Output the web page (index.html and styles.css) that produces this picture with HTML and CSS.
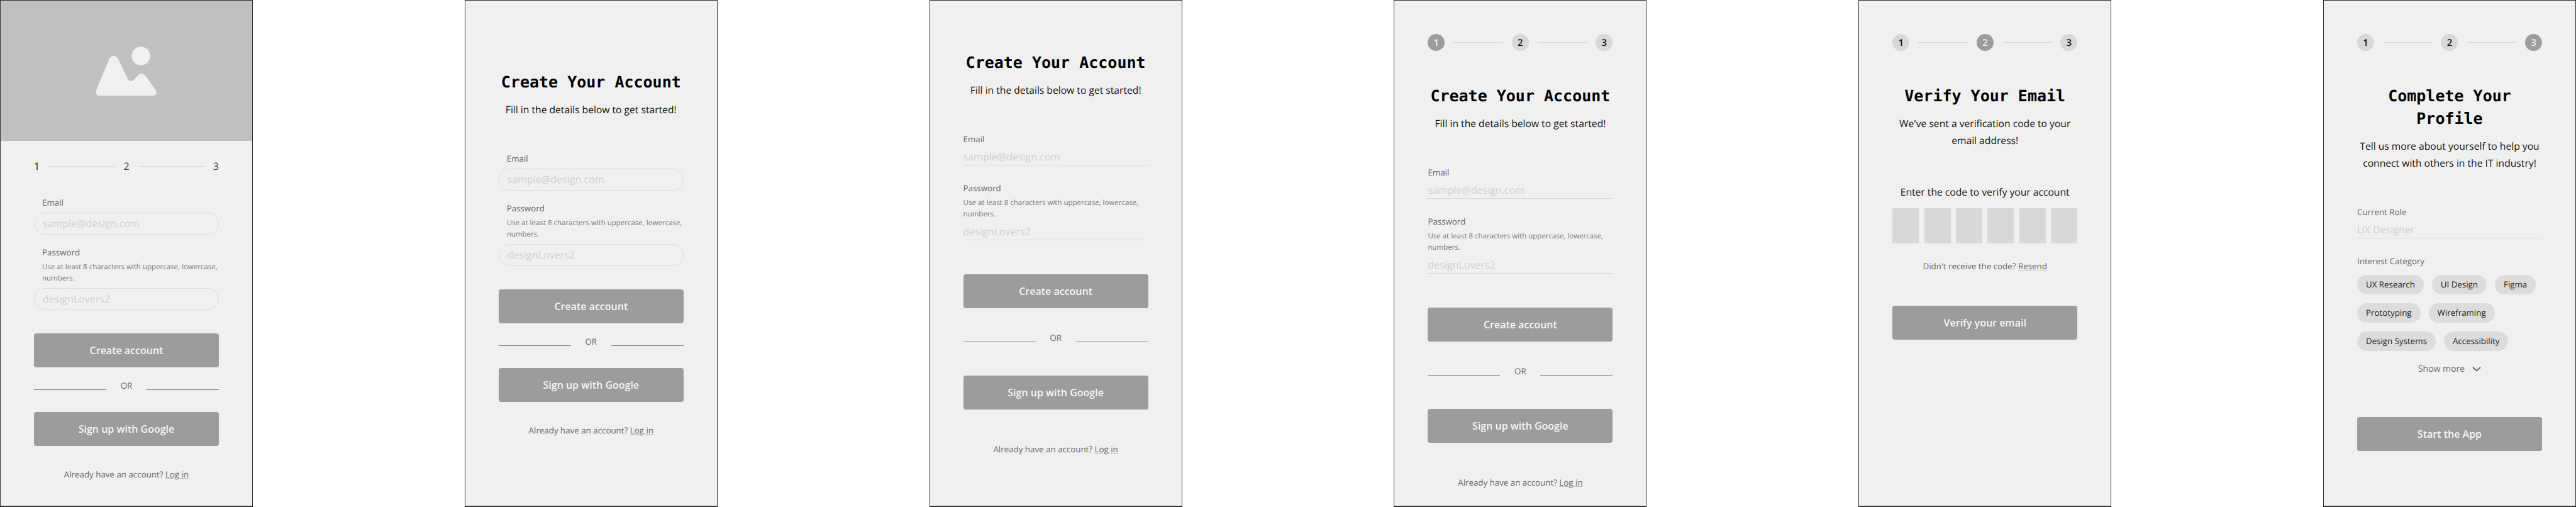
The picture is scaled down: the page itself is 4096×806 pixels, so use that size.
FILE: index.html
```html
<!DOCTYPE html>
<html lang="en">
<head>
  <meta charset="UTF-8">
  <title>Sign Up Wireframes</title>
  <link rel="stylesheet" href="styles.css">
</head>
<body>

  <!-- Variant with hero image and number stepper -->
  <div class="screen">
    <div class="hero">
      <svg width="98" height="78" viewBox="0 0 98 78">
        <circle cx="72" cy="15" r="14.7" fill="#f0f0f0"/>
        <path fill="#f0f0f0" d="M6 78H91C96 78 98.5 73 95.5 69L79 46C76.5 42.5 71 42 68.5 45L60 53.5C57 56 53.5 55 51.5 52L35.5 19C32.5 13.5 25 13.5 22 19L1 69.5C-.5 73 1.5 78 6 78Z"/>
      </svg>
    </div>
    <div class="content hero-content">
      <div class="stepper plain">
        <span class="num current">1</span><span class="step-line"></span>
        <span class="num">2</span><span class="step-line"></span>
        <span class="num">3</span>
      </div>
      <div class="form pill">
        <div class="label">Email</div>
        <div class="input">sample@design.com</div>
        <div class="label">Password</div>
        <div class="hint">Use at least 8 characters with uppercase, lowercase, numbers.</div>
        <div class="input">designLovers2</div>
      </div>
      <button class="btn create">Create account</button>
      <div class="or"><span class="or-line"></span><span class="or-text">OR</span><span class="or-line"></span></div>
      <button class="btn">Sign up with Google</button>
      <div class="foot">Already have an account? <a href="#">Log in</a></div>
    </div>
  </div>

  <!-- Pill inputs, no stepper -->
  <div class="screen">
    <div class="content top-112">
      <h2>Create Your Account</h2>
      <p class="sub">Fill in the details below to get started!</p>
      <div class="form pill">
        <div class="label">Email</div>
        <div class="input">sample@design.com</div>
        <div class="label">Password</div>
        <div class="hint">Use at least 8 characters with uppercase, lowercase, numbers.</div>
        <div class="input">designLovers2</div>
      </div>
      <button class="btn create">Create account</button>
      <div class="or"><span class="or-line"></span><span class="or-text">OR</span><span class="or-line"></span></div>
      <button class="btn">Sign up with Google</button>
      <div class="foot">Already have an account? <a href="#">Log in</a></div>
    </div>
  </div>

  <!-- Underlined inputs, no stepper -->
  <div class="screen">
    <div class="content top-81">
      <h2>Create Your Account</h2>
      <p class="sub">Fill in the details below to get started!</p>
      <div class="form underline">
        <div class="label">Email</div>
        <div class="input">sample@design.com</div>
        <div class="label">Password</div>
        <div class="hint">Use at least 8 characters with uppercase, lowercase, numbers.</div>
        <div class="input">designLovers2</div>
      </div>
      <button class="btn create">Create account</button>
      <div class="or"><span class="or-line"></span><span class="or-text">OR</span><span class="or-line"></span></div>
      <button class="btn">Sign up with Google</button>
      <div class="foot">Already have an account? <a href="#">Log in</a></div>
    </div>
  </div>

  <!-- Step 1 -->
  <div class="screen">
    <div class="content top-53">
      <div class="stepper">
        <span class="dot active">1</span><span class="step-line"></span>
        <span class="dot">2</span><span class="step-line"></span>
        <span class="dot">3</span>
      </div>
      <h2>Create Your Account</h2>
      <p class="sub">Fill in the details below to get started!</p>
      <div class="form underline">
        <div class="label">Email</div>
        <div class="input">sample@design.com</div>
        <div class="label">Password</div>
        <div class="hint">Use at least 8 characters with uppercase, lowercase, numbers.</div>
        <div class="input">designLovers2</div>
      </div>
      <button class="btn create">Create account</button>
      <div class="or"><span class="or-line"></span><span class="or-text">OR</span><span class="or-line"></span></div>
      <button class="btn">Sign up with Google</button>
      <div class="foot">Already have an account? <a href="#">Log in</a></div>
    </div>
  </div>

  <!-- Step 2 -->
  <div class="screen">
    <div class="content top-53">
      <div class="stepper">
        <span class="dot">1</span><span class="step-line"></span>
        <span class="dot active">2</span><span class="step-line"></span>
        <span class="dot">3</span>
      </div>
      <h2>Verify Your Email</h2>
      <p class="sub">We've sent a verification code to your email address!</p>
      <p class="code-title">Enter the code to verify your account</p>
      <div class="code-boxes">
        <span class="code-box"></span>
        <span class="code-box"></span>
        <span class="code-box"></span>
        <span class="code-box"></span>
        <span class="code-box"></span>
        <span class="code-box"></span>
      </div>
      <div class="resend">Didn't receive the code? <a href="#">Resend</a></div>
      <button class="btn verify">Verify your email</button>
    </div>
  </div>

  <!-- Step 3 -->
  <div class="screen">
    <div class="content top-53">
      <div class="stepper">
        <span class="dot">1</span><span class="step-line"></span>
        <span class="dot">2</span><span class="step-line"></span>
        <span class="dot active">3</span>
      </div>
      <h2>Complete Your Profile</h2>
      <p class="sub">Tell us more about yourself to help you connect with others in the IT industry!</p>
      <div class="form underline">
        <div class="label">Current Role</div>
        <div class="input">UX Designer</div>
        <div class="label">Interest Category</div>
      </div>
      <div class="chips">
        <span class="chip">UX Research</span>
        <span class="chip">UI Design</span>
        <span class="chip">Figma</span>
        <span class="chip">Prototyping</span>
        <span class="chip">Wireframing</span>
        <span class="chip">Design Systems</span>
        <span class="chip">Accessibility</span>
      </div>
      <div class="show-more">
        Show more
        <svg width="14" height="8" viewBox="0 0 14 8"><path d="M1 1L7 6.5L13 1" fill="none" stroke="#666" stroke-width="2"/></svg>
      </div>
      <button class="btn start">Start the App</button>
    </div>
  </div>

</body>
</html>
```

FILE: styles.css
```css
* {
  box-sizing: border-box;
}
body {
  margin: 0;
  height: 806px;
  display: flex;
  justify-content: space-between;
  background: #fff;
  font-family: "Open Sans", sans-serif;
  text-rendering: geometricPrecision;
}
.screen {
  width: 402px;
  height: 806px;
  background: #f0f0f0;
  border: 1px solid #333;
  border-bottom-width: 2px;
  overflow: hidden;
}
.hero {
  height: 223px;
  background: #c0c0c0;
  display: flex;
  align-items: center;
  justify-content: center;
}
.content {
  padding: 0 53px;
}
.hero-content {
  padding-top: 29px;
}
.top-112 {
  padding-top: 112px;
}
.top-81 {
  padding-top: 81px;
}
.top-53 {
  padding-top: 53px;
}

/* Stepper */
.stepper {
  display: flex;
  align-items: center;
  margin-bottom: 54px;
}
.stepper.plain {
  margin-bottom: 38px;
}
.step-line {
  flex: 1;
  height: 1px;
  margin: 0 14px;
  background: #d8d8d8;
}
.num {
  font-size: 16px;
  line-height: 22px;
  color: #444;
}
.num.current {
  color: #111;
}
.dot {
  width: 27px;
  height: 27px;
  border-radius: 50%;
  background: #d8d8d8;
  color: #111;
  font-size: 15px;
  font-weight: 600;
  display: flex;
  align-items: center;
  justify-content: center;
}
.dot.active {
  background: #9c9c9c;
  color: #f0f0f0;
}

/* Headings */
h2 {
  margin: 0;
  font-family: "DejaVu Sans Mono", monospace;
  font-size: 25px;
  line-height: 36px;
  font-weight: bold;
  color: #000;
  text-align: center;
}
.sub {
  margin: 12px 0 55px;
  font-size: 15.66px;
  line-height: 27px;
  color: #111;
  text-align: center;
}

/* Form fields */
.label {
  font-size: 13.33px;
  line-height: 19px;
  color: #666;
}
.hint {
  margin-top: 5px;
  font-size: 11.5px;
  line-height: 18px;
  color: #777;
}
.input {
  font-size: 16px;
  color: #cfcfcf;
}
.form .input + .label {
  margin-top: 19px;
}
.pill .label,
.pill .hint {
  padding-left: 13px;
}
.pill .input {
  height: 35px;
  margin-top: 6px;
  padding-left: 13px;
  line-height: 33px;
  border: 1px solid #dcdcdc;
  border-radius: 18px;
}
.underline .input {
  height: 31px;
  margin-top: 1px;
  padding-top: 4px;
  line-height: 26px;
  border-bottom: 1px solid #d8d8d8;
}
.underline .input + .label {
  margin-top: 27px;
}

/* Buttons */
.btn {
  display: block;
  width: 100%;
  height: 54px;
  border: none;
  border-radius: 4px;
  background: #9c9c9c;
  color: #f5f5f5;
  font-family: "Open Sans", sans-serif;
  font-size: 16px;
  font-weight: 600;
}
.pill + .create {
  margin-top: 37px;
}
.underline + .create {
  margin-top: 54px;
}
.or {
  display: flex;
  align-items: flex-end;
  margin: 20px 0 32px;
}
.underline + .create + .or {
  margin: 38px 0 50px;
}
.or-line {
  flex: 1;
  height: 1px;
  margin-bottom: 3px;
  background: #777;
}
.or-text {
  width: 64px;
  font-size: 13.33px;
  line-height: 19px;
  color: #666;
  text-align: center;
}
.foot,
.resend {
  font-size: 13.33px;
  line-height: 19px;
  color: #666;
  text-align: center;
}
.foot {
  margin-top: 36px;
}
.underline + .create + .or + .btn + .foot {
  margin-top: 54px;
}
.foot a,
.resend a {
  color: #666;
  text-decoration-color: #bbb;
}

/* Verify step */
.code-title {
  margin: 0 0 12px;
  font-size: 15.66px;
  line-height: 27px;
  color: #111;
  text-align: center;
}
.code-boxes {
  display: flex;
  justify-content: space-between;
}
.code-box {
  width: 42px;
  height: 56px;
  background: #d8d8d8;
}
.resend {
  margin-top: 27px;
}
.verify {
  margin-top: 53px;
}

/* Profile step */
.chips {
  display: flex;
  flex-wrap: wrap;
  gap: 14px 13px;
  margin-top: 12px;
}
.chip {
  height: 31px;
  padding: 0 14px;
  border-radius: 16px;
  background: #dcdcdc;
  font-size: 13.33px;
  line-height: 31px;
  color: #222;
}
.show-more {
  display: flex;
  align-items: center;
  justify-content: center;
  gap: 12px;
  margin-top: 19px;
  font-size: 14px;
  line-height: 19px;
  font-weight: 500;
  color: #666;
}
.start {
  margin-top: 67px;
}
```
